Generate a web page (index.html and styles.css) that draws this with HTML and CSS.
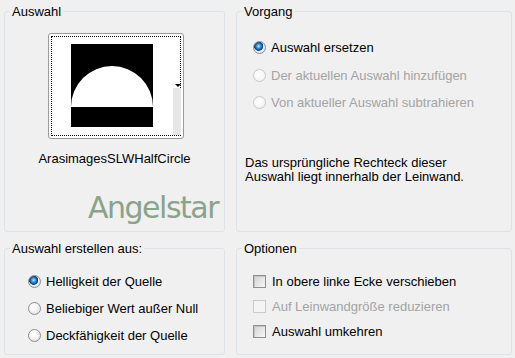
FILE: index.html
```html
<!DOCTYPE html>
<html lang="de">
<head>
    <meta charset="UTF-8">
    <title>Auswahl aus Maske</title>
    <link rel="stylesheet" href="styles.css">
</head>
<body>
    <div class="dialog">
        <fieldset class="group">
            <legend>Auswahl</legend>
            <div class="preview">
                <div class="preview-focus">
                    <svg class="preview-image" width="82" height="83" viewBox="0 0 82 83">
                        <rect width="82" height="83" fill="#000"/>
                        <path d="M0 63 A41 41 0 0 1 82 63 Z" fill="#fff"/>
                    </svg>
                    <span class="preview-scroll"></span>
                    <span class="preview-arrow"></span>
                </div>
            </div>
            <div class="preview-name">ArasimagesSLWHalfCircle</div>
            <div class="watermark">Angelstar</div>
        </fieldset>

        <fieldset class="group">
            <legend>Vorgang</legend>
            <div class="group-body mode-body">
                <label class="option">
                    <input type="radio" class="radio" name="mode" checked>
                    <span>Auswahl ersetzen</span>
                </label>
                <label class="option is-disabled">
                    <input type="radio" class="radio" name="mode" disabled>
                    <span>Der aktuellen Auswahl hinzufügen</span>
                </label>
                <label class="option is-disabled">
                    <input type="radio" class="radio" name="mode" disabled>
                    <span>Von aktueller Auswahl subtrahieren</span>
                </label>
            </div>
            <p class="note">Das ursprüngliche Rechteck dieser<br>Auswahl liegt innerhalb der Leinwand.</p>
        </fieldset>

        <fieldset class="group">
            <legend>Auswahl erstellen aus:</legend>
            <div class="group-body source-body">
                <label class="option">
                    <input type="radio" class="radio" name="source" checked>
                    <span>Helligkeit der Quelle</span>
                </label>
                <label class="option">
                    <input type="radio" class="radio" name="source">
                    <span>Beliebiger Wert außer Null</span>
                </label>
                <label class="option">
                    <input type="radio" class="radio" name="source">
                    <span>Deckfähigkeit der Quelle</span>
                </label>
            </div>
        </fieldset>

        <fieldset class="group">
            <legend>Optionen</legend>
            <div class="group-body options-body">
                <label class="option">
                    <input type="checkbox" class="check">
                    <span>In obere linke Ecke verschieben</span>
                </label>
                <label class="option is-disabled">
                    <input type="checkbox" class="check" disabled>
                    <span>Auf Leinwandgröße reduzieren</span>
                </label>
                <label class="option">
                    <input type="checkbox" class="check">
                    <span>Auswahl umkehren</span>
                </label>
            </div>
        </fieldset>
    </div>
</body>
</html>
```

FILE: styles.css
```css
:root {
    --face-color: #f0f0f0;
    --frame-color: #dde3e7;
    --text-color: #000;
    --disabled-color: #a3a3a3;
}

body {
    margin: 0;
    background-color: var(--face-color);
    color: var(--text-color);
    font-family: 'Liberation Sans', Arial, sans-serif;
    font-size: 13px;
    line-height: 15px;
}

.dialog {
    display: grid;
    grid-template-columns: 221px 276px;
    grid-template-rows: 228px 114px;
    column-gap: 11px;
    row-gap: 9px;
    padding: 4px 3px 3px 4px;
}

.group {
    margin: 0;
    padding: 0;
    min-width: 0;
    border: 1px solid var(--frame-color);
    border-radius: 3px;
}

.group legend {
    margin-left: 5px;
    padding: 0 2px;
    line-height: 15px;
}

/* preview button */
.preview {
    box-sizing: border-box;
    width: 136px;
    height: 106px;
    margin: 14px 0 0 43px;
    padding: 2px;
    background-color: #fff;
    border: 1px solid #9a9a9a;
    border-radius: 3px;
}

.preview-focus {
    position: relative;
    box-sizing: border-box;
    height: 100px;
    border: 1px dotted #000;
}

.preview-image {
    display: block;
    margin: 7px 0 0 19px;
}

.preview-scroll {
    position: absolute;
    left: 121px;
    top: 51px;
    bottom: 0;
    width: 8px;
    background-color: #e6e6e6;
}

.preview-arrow {
    position: absolute;
    left: 123px;
    top: 47px;
    width: 0;
    height: 0;
    border-left: 3px solid transparent;
    border-right: 3px solid transparent;
    border-top: 3px solid #000;
}

.preview-name {
    margin-top: 12px;
    text-align: center;
}

.watermark {
    margin-top: 27px;
    padding-right: 6px;
    text-align: right;
    font-family: 'DejaVu Sans', sans-serif;
    font-size: 30px;
    line-height: 30px;
    letter-spacing: -1.5px;
    color: #8aa38a;
}

/* options */
.mode-body {
    padding: 15px 0 0 16px;
}

.mode-body .option {
    height: 27.5px;
}

.source-body {
    padding: 12px 0 0 23px;
}

.source-body .option {
    height: 27px;
}

.options-body {
    padding: 13px 0 0 16px;
}

.options-body .option {
    height: 25px;
    gap: 6px;
}

.option {
    display: flex;
    align-items: center;
    gap: 5px;
}

.option.is-disabled {
    color: var(--disabled-color);
}

.radio {
    appearance: none;
    flex: none;
    width: 13px;
    height: 13px;
    margin: 0;
    border: 1px solid #8c8c8c;
    border-radius: 50%;
    background: radial-gradient(circle at 40% 35%, #fff 20%, #d9d9d9 100%);
}

.radio:checked {
    background:
        radial-gradient(circle at 42% 38%, #d2f0ff 0, #4cabee 1.5px, #1466b4 3.2px, #0a3f78 4.3px, transparent 4.9px),
        radial-gradient(circle at 40% 35%, #fff 20%, #d9d9d9 100%);
}

.radio:disabled {
    border-color: #c8c8c8;
    background: radial-gradient(circle at 40% 35%, #fbfbfb 30%, #ececec 100%);
}

.check {
    appearance: none;
    flex: none;
    width: 13px;
    height: 13px;
    margin: 0;
    border: 1px solid #8e8f8f;
    background: linear-gradient(135deg, #d2d2d2, #f7f7f7);
    box-shadow: inset 1px 1px 0 #c4c4c4;
}

.check:disabled {
    border-color: #cacaca;
    background: #f4f4f4;
    box-shadow: none;
}

.note {
    margin: 39.5px 0 0 8px;
    line-height: 14px;
}
```
